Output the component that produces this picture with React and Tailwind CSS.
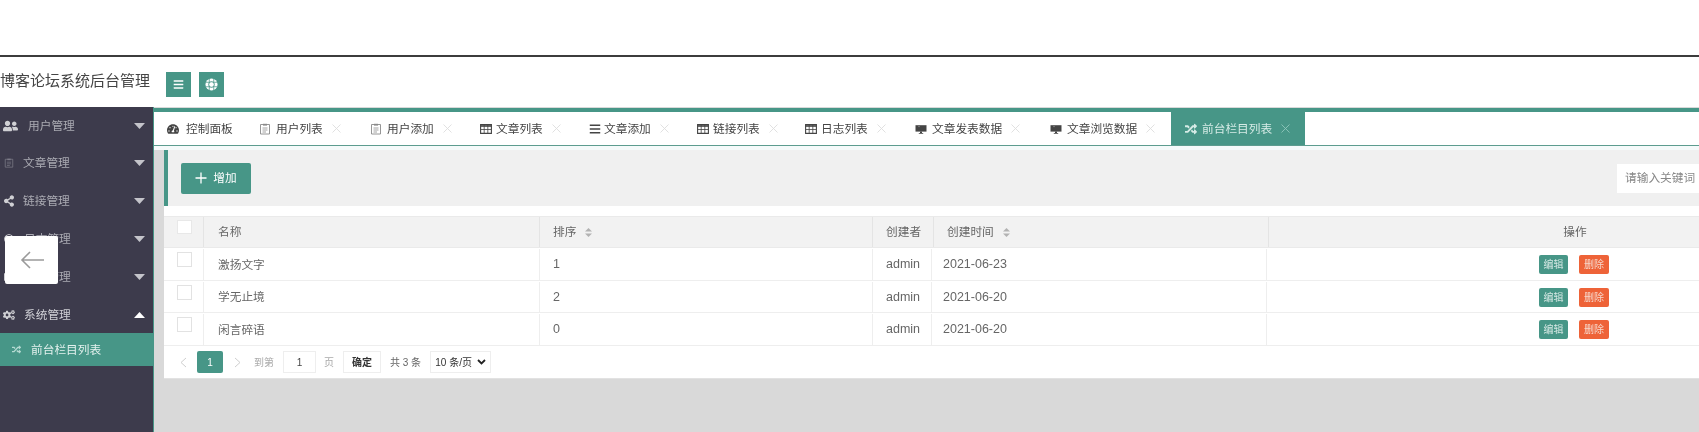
import React from "react";
import { FaBars, FaUserFriends, FaShareAlt, FaRegClock, FaCogs, FaRandom, FaTachometerAlt, FaChartBar } from "react-icons/fa";

const teal = "bg-[#479687]";

function Clip({ className }) {
  return (
    <svg viewBox="0 0 12 12" className={className}>
      <path d="M1.5 1.5H10.5V11H1.5Z" fill="none" stroke="currentColor" strokeWidth="0.9" />
      <path d="M4 0.8H8V2.6H4Z" fill="currentColor" />
      <path d="M3.5 5H8.5M3.5 7H8.5M3.5 9H7" stroke="currentColor" strokeWidth="0.8" fill="none" />
    </svg>
  );
}

function Grid({ className }) {
  return (
    <svg viewBox="0 0 12 12" className={className}>
      <path d="M0.6 1.6H11.4V10.4H0.6Z" fill="none" stroke="currentColor" strokeWidth="1.1" />
      <path d="M0.6 3H11.4" stroke="currentColor" strokeWidth="1.6" />
      <path d="M4.2 2V10M7.8 2V10M1 6.5H11" stroke="currentColor" strokeWidth="0.8" />
    </svg>
  );
}

function Monitor({ className }) {
  return (
    <svg viewBox="0 0 12 12" className={className}>
      <path d="M0.5 2.2H11.5V8.6H0.5Z" fill="currentColor" />
      <path d="M3 3.6H5" stroke="#8a8a8a" strokeWidth="0.7" />
      <path d="M5 8.6H7V10.2H5ZM3.8 10H8.2V10.8H3.8Z" fill="currentColor" />
    </svg>
  );
}

function Ring({ className }) {
  return (
    <svg viewBox="0 0 14 14" className={className}>
      <circle cx="7" cy="7" r="6.5" fill="#fff" />
      <circle cx="7" cy="7" r="3" fill="none" stroke="#479687" strokeWidth="1" />
      <path d="M4.6 1V13M9.4 1V13M1 4.6H13M1 9.4H13" stroke="#479687" strokeWidth="0.8" />
      <circle cx="7" cy="7" r="2.4" fill="#fff" />
    </svg>
  );
}

function Caret({ up }) {
  return (
    <svg width="11" height="6" viewBox="0 0 11 6" className="ml-auto mr-[8px] shrink-0">
      <polygon points={up ? "5.5,0 11,6 0,6" : "0,0 11,0 5.5,6"} fill={up ? "#ffffff" : "#c4c4ca"} />
    </svg>
  );
}

const menu = [
  { name: "用户管理", Icon: FaUserFriends, pad: "pl-[3px]", gap: "gap-[10px]", w: "w-[15px]", h: "h-[37px]" },
  { name: "文章管理", Icon: Clip, pad: "pl-[4px]", gap: "gap-[9px]", w: "w-[10px]", h: "h-[38px]", dim: true },
  { name: "链接管理", Icon: FaShareAlt, pad: "pl-[4px]", gap: "gap-[9px]", w: "w-[10px]", h: "h-[38px]" },
  { name: "日志管理", Icon: FaRegClock, pad: "pl-[4px]", gap: "gap-[10px]", w: "w-[10px]", h: "h-[38px]" },
  { name: "图表管理", Icon: FaChartBar, pad: "pl-[4px]", gap: "gap-[10px]", w: "w-[10px]", h: "h-[38px]" },
  { name: "系统管理", Icon: FaCogs, pad: "pl-[3px]", gap: "gap-[9px]", w: "w-[12px]", h: "h-[37px]", open: true },
];

const tabs = [
  { name: "控制面板", Icon: FaTachometerAlt, first: true, w: "w-[91px]", ml: "ml-[7px]" },
  { name: "用户列表", Icon: Clip, light: true, w: "w-[111px]", ml: "ml-[5px]" },
  { name: "用户添加", Icon: Clip, light: true, w: "w-[110px]", ml: "ml-[5px]" },
  { name: "文章列表", Icon: Grid, w: "w-[109px]", ml: "ml-[4px]" },
  { name: "文章添加", Icon: FaBars, w: "w-[108px]", ml: "ml-[3px]" },
  { name: "链接列表", Icon: Grid, w: "w-[108px]", ml: "ml-[4px]" },
  { name: "日志列表", Icon: Grid, w: "w-[110px]", ml: "ml-[4px]" },
  { name: "文章发表数据", Icon: Monitor, w: "w-[135px]", ml: "ml-[5px]" },
  { name: "文章浏览数据", Icon: Monitor, w: "w-[135px]", ml: "ml-[5px]" },
  { name: "前台栏目列表", Icon: FaRandom, active: true, w: "w-[134px]", ml: "ml-[5px]" },
];

const rows = [
  { name: "激扬文字", sort: "1", date: "2021-06-23", h: "h-[33px]" },
  { name: "学无止境", sort: "2", date: "2021-06-20", h: "h-[32px]" },
  { name: "闲言碎语", sort: "0", date: "2021-06-20", h: "h-[33px]" },
];

function Sort() {
  return (
    <svg width="7" height="9" viewBox="0 0 7 9" className="ml-[9px] inline-block">
      <polygon points="3.5,0 7,3.5 0,3.5" fill="#b2b2b2" />
      <polygon points="0,5.5 7,5.5 3.5,9" fill="#b2b2b2" />
    </svg>
  );
}

function Close({ light }) {
  return (
    <svg width="9" height="9" viewBox="0 0 9 9" className="ml-[9px] shrink-0">
      <path d="M0.5 0.5L8.5 8.5M8.5 0.5L0.5 8.5" stroke={light ? "#8fc6ba" : "#dedede"} strokeWidth="0.9" fill="none" />
    </svg>
  );
}

export default function App() {
  return (
    <div className="h-[432px] w-[1699px] overflow-hidden bg-white text-[11.7px] text-[#666] font-['Liberation_Sans','Noto_Sans_CJK_SC',sans-serif] blur-[0.5px]">
      <div className="h-[55px] border-b-2 border-[#3c3c3c] box-content" />
      <header className="flex h-[50px] items-center pt-[5px]">
        <div className="w-[166px] shrink-0 text-[15px] leading-[40px] text-[#444] -mt-[7px]">博客论坛系统后台管理</div>
        <button className={`flex h-[25px] w-[25px] items-center justify-center ${teal} text-white`}>
          <FaBars className="h-[11px] w-[11px]" />
        </button>
        <button className={`ml-[8px] flex h-[25px] w-[25px] items-center justify-center ${teal} text-white`}>
          <Ring className="h-[13px] w-[13px]" />
        </button>
      </header>

      <div className="flex h-[325px]">
        <aside className="w-[153px] shrink-0 bg-[#3d3b4c] text-[#aaaab2]">
          {menu.map((m) => (
            <div key={m.name} className={`flex items-center ${m.h} ${m.pad} ${m.gap} ${m.open ? "text-[#d0d0d6]" : ""}`}>
              <m.Icon className={`${m.w} h-[12px] shrink-0 ${m.dim ? "text-[#7d7b88]" : "text-[#d0d0d4]"}`} />
              <span>{m.name}</span>
              <Caret up={m.open} />
            </div>
          ))}
          <div className={`flex h-[33px] items-center pl-[12px] gap-[10px] ${teal} text-[#e4f1ee]`}>
            <FaRandom className="h-[9px] w-[9px] shrink-0 text-[#b5dad2]" />
            <span>前台栏目列表</span>
          </div>
        </aside>

        <main className="min-w-0 flex-1 bg-[#d9d9d9] border-l border-[#479687] pl-px">
          <div className="bg-white -ml-px">
            <div className={`h-[4px] mt-px ${teal}`} />
            <nav className="flex h-[34px] border-b border-[#5d9c8f] bg-white text-[#444]">
              {tabs.map((t) => (
                <div
                  key={t.name}
                  className={`flex shrink-0 items-center ${t.w} ${t.first ? "pl-[13px]" : "pl-[14px]"} ${t.active ? `${teal} text-[#d6ebe6]` : ""}`}
                >
                  <t.Icon className={`h-[12px] w-[12px] shrink-0 ${t.light ? "text-[#8a8a8a]" : ""}`} />
                  <span className={`whitespace-nowrap ${t.ml}`}>{t.name}</span>
                  {!t.first && <Close light={t.active} />}
                </div>
              ))}
            </nav>
            <div className="h-[4px] bg-[#f5fafa]" />
          </div>

          <div className="ml-[9px] w-[1800px] bg-white">
            <div className="flex h-[56px] items-center border-l-4 border-[#479687] bg-[#f0f0f0]">
              <button className={`ml-[13px] flex h-[31px] w-[70px] items-center justify-center gap-[6px] rounded-[2px] ${teal} text-white`}>
                <svg width="12" height="12" viewBox="0 0 12 12"><path d="M6 0.5V11.5M0.5 6H11.5" stroke="currentColor" strokeWidth="1.3" fill="none" /></svg>
                <span>增加</span>
              </button>
              <div className="ml-[1366px] flex h-[29px] w-[150px] items-center bg-white pl-[8px] text-[#888]">请输入关键词</div>
            </div>

            <div className="mt-[10px] flex h-[32px] items-center border-y border-[#eaeaea] bg-[#f2f2f2]">
              <div className="flex h-full w-[40px] shrink-0 border-r border-[#e4e4e4] pl-[13px] pt-[3px]">
                <div className="h-[14px] w-[15px] bg-white border border-[#e8e8e8]" />
              </div>
              <div className="flex h-full w-[336px] shrink-0 items-center border-r border-[#e4e4e4] pl-[14px]">名称</div>
              <div className="flex h-full w-[333px] shrink-0 items-center border-r border-[#e4e4e4] pl-[13px]">排序<Sort /></div>
              <div className="flex h-full w-[61px] shrink-0 items-center border-r border-[#e4e4e4] pl-[13px]">创建者</div>
              <div className="flex h-full w-[335px] shrink-0 items-center border-r border-[#e4e4e4] pl-[13px]">创建时间<Sort /></div>
              <div className="flex h-full w-[612px] shrink-0 items-center justify-center">操作</div>
            </div>

            {rows.map((r) => (
              <div key={r.name} className={`flex ${r.h} items-center border-b border-[#eeeeee] bg-white pt-px`}>
                <div className="flex h-full w-[40px] shrink-0 border-r border-[#eeeeee] pl-[13px] pt-[3px]">
                  <div className="h-[15px] w-[15px] border border-[#e2e2e2] bg-white" />
                </div>
                <div className="flex h-full w-[336px] shrink-0 items-center border-r border-[#eeeeee] pl-[14px]">{r.name}</div>
                <div className="flex h-full w-[333px] shrink-0 items-center border-r border-[#eeeeee] pl-[13px] text-[12.5px]">{r.sort}</div>
                <div className="flex h-full w-[59px] shrink-0 items-center border-r border-[#eeeeee] pl-[13px] text-[12.5px]">admin</div>
                <div className="flex h-full w-[335px] shrink-0 items-center border-r border-[#eeeeee] pl-[11px] text-[12.5px]">{r.date}</div>
                <div className="flex h-full w-[616px] shrink-0 items-center gap-[11px] pl-[272px] text-[10px] text-[#d6e8e4]">
                  <span className={`flex h-[19px] w-[29px] items-center justify-center rounded-[2px] ${teal}`}>编辑</span>
                  <span className="flex h-[19px] w-[30px] items-center justify-center rounded-[2px] bg-[#ee6338] text-[#f6d8cc]">删除</span>
                </div>
              </div>
            ))}

            <div className="flex h-[33px] items-center border-b border-[#e2e2e2] pl-[16px] text-[10px]">
              <svg width="7" height="11" viewBox="0 0 7 11"><path d="M6 1L1 5.5L6 10" stroke="#cfcfcf" fill="none" /></svg>
              <div className={`ml-[10px] flex h-[22px] w-[26px] items-center justify-center rounded-[2px] ${teal} text-white`}>1</div>
              <svg width="7" height="11" viewBox="0 0 7 11" className="ml-[11px]"><path d="M1 1L6 5.5L1 10" stroke="#cfcfcf" fill="none" /></svg>
              <span className="ml-[13px] text-[#aaa]">到第</span>
              <div className="ml-[9px] flex h-[22px] w-[33px] items-center justify-center border border-[#eeeeee] text-[#444]">1</div>
              <span className="ml-[8px] text-[#aaa]">页</span>
              <div className="ml-[9px] flex h-[22px] w-[38px] items-center justify-center border border-[#eeeeee] text-[#333] font-bold">确定</div>
              <span className="ml-[9px] text-[#666]">共 3 条</span>
              <div className="ml-[9px] flex h-[22px] w-[61px] items-center justify-center gap-[5px] border border-[#eeeeee] text-[#333]">
                <span>10 条/页</span>
                <svg width="9" height="6" viewBox="0 0 9 6"><path d="M1 1L4.5 4.5L8 1" stroke="#222" strokeWidth="1.8" fill="none" /></svg>
              </div>
            </div>
          </div>
        </main>
      </div>

      <div className="absolute left-[5px] top-[236px] flex h-[48px] w-[53px] items-center justify-center rounded-[2px] bg-white">
        <svg width="24" height="20" viewBox="0 0 24 20"><path d="M24 10H2M10 2L2 10L10 18" stroke="#9a9a9a" strokeWidth="1.6" fill="none" /></svg>
      </div>
    </div>
  );
}
